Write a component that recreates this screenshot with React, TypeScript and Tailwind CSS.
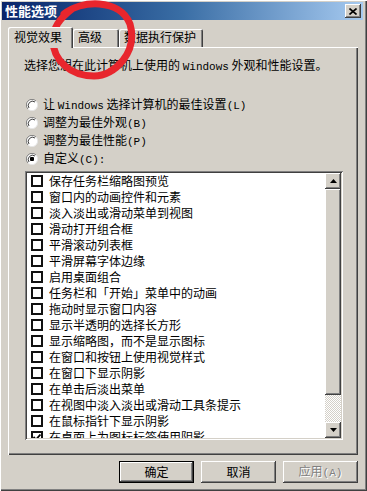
import React from 'react';

const raised =
  'shadow-[inset_-1px_-1px_#404040,inset_1px_1px_#ffffff,inset_-2px_-2px_#808080,inset_2px_2px_#d4d0c8]';
const sunken =
  'shadow-[inset_1px_1px_#808080,inset_-1px_-1px_#ffffff,inset_2px_2px_#404040,inset_-2px_-2px_#d4d0c8]';

const Mono: React.FC<{ children: React.ReactNode }> = ({ children }) => (
  <span className="font-['Liberation_Mono',monospace] text-[11px]">{children}</span>
);

const radios: { label: React.ReactNode; checked?: boolean }[] = [
  { label: <>让 <Mono>Windows</Mono> 选择计算机的最佳设置<Mono>(L)</Mono></> },
  { label: <>调整为最佳外观<Mono>(B)</Mono></> },
  { label: <>调整为最佳性能<Mono>(P)</Mono></> },
  { label: <>自定义<Mono>(C):</Mono></>, checked: true },
];

const options = [
  '保存任务栏缩略图预览',
  '窗口内的动画控件和元素',
  '淡入淡出或滑动菜单到视图',
  '滑动打开组合框',
  '平滑滚动列表框',
  '平滑屏幕字体边缘',
  '启用桌面组合',
  '任务栏和「开始」菜单中的动画',
  '拖动时显示窗口内容',
  '显示半透明的选择长方形',
  '显示缩略图，而不是显示图标',
  '在窗口和按钮上使用视觉样式',
  '在窗口下显示阴影',
  '在单击后淡出菜单',
  '在视图中淡入淡出或滑动工具条提示',
  '在鼠标指针下显示阴影',
  '在桌面上为图标标签使用阴影',
];

const Radio: React.FC<{ checked?: boolean }> = ({ checked }) => (
  <svg width="12" height="12" viewBox="0 0 12 12" className="shrink-0">
    <circle cx="6" cy="6" r="5.5" fill="#fff" />
    <path d="M10 2 A5.5 5.5 0 0 0 2 10" fill="none" stroke="#808080" strokeWidth="1" />
    <path d="M9 3 A4.3 4.3 0 0 0 3 9" fill="none" stroke="#404040" strokeWidth="1" />
    <path d="M2 10 A5.5 5.5 0 0 0 10 2" fill="none" stroke="#e6e6e6" strokeWidth="1" />
    {checked && <rect x="4" y="4" width="4" height="4" rx="1" fill="#000" />}
  </svg>
);

const Arrow: React.FC<{ up?: boolean }> = ({ up }) => (
  <svg width="7" height="4" viewBox="0 0 7 4">
    <path d={up ? 'M3.5 0 L7 4 L0 4 Z' : 'M0 0 L7 0 L3.5 4 Z'} fill="#000" />
  </svg>
);

const Tab: React.FC<{ label: string; active?: boolean; width: number }> = ({ label, active, width }) => (
  <div
    style={{ width }}
    className={
      active
        ? 'relative z-10 -mb-px h-[21px] bg-[#d4d0c8] rounded-t-[2px] pl-[6px] pt-[3px] shadow-[inset_1px_1px_#ffffff,inset_-1px_0_#404040,inset_-2px_0_#808080]'
        : 'h-[18px] bg-[#d4d0c8] rounded-t-[2px] pl-[5px] pt-[1px] shadow-[inset_1px_1px_#ffffff,inset_-1px_0_#404040,inset_-2px_0_#808080]'
    }
  >
    <span className="leading-[14px]">{label}</span>
  </div>
);

const Button: React.FC<{ label: React.ReactNode; primary?: boolean; disabled?: boolean }> = ({
  label,
  primary,
  disabled,
}) => (
  <div
    className={
      'w-[75px] h-[22px] flex items-center justify-center bg-[#d4d0c8] ' +
      (primary
        ? 'border border-black shadow-[inset_-1px_-1px_#404040,inset_1px_1px_#ffffff,inset_-2px_-2px_#808080]'
        : raised)
    }
  >
    <span className={disabled ? 'text-[#808080] [text-shadow:1px_1px_#ffffff]' : 'text-black'}>
      {label}
    </span>
  </div>
);

export default function App() {
  return (
    <div className="relative w-[367px] h-[491px] overflow-hidden bg-[#d4d0c8] pt-[2px] pl-[2px] pr-[4px] text-[12px] leading-[14px] text-black font-['Noto_Sans_CJK_SC',sans-serif] shadow-[inset_1px_1px_#ffffff,inset_-1px_-1px_#404040,inset_-2px_-2px_#808080]">
      {/* title bar */}
      <div className="h-[18px] flex items-center justify-between pl-[3px] pr-[2px] bg-linear-to-r from-[#0a246a] via-[#3a6ea5] to-[#a6caf0]">
        <span className="text-white font-bold text-[13px] leading-[16px]">性能选项</span>
        <div className={`w-[16px] h-[14px] flex items-center justify-center bg-[#d4d0c8] ${raised}`}>
          <svg width="8" height="7" viewBox="0 0 8 7">
            <path d="M0.5 0.5 L7.5 6.5 M7.5 0.5 L0.5 6.5" stroke="#000" strokeWidth="1.6" />
          </svg>
        </div>
      </div>

      {/* tabs */}
      <div className="mt-[7px] ml-[6px] flex items-end h-[20px]">
        <Tab label="视觉效果" active width={65} />
        <Tab label="高级" width={46} />
        <Tab label="数据执行保护" width={84} />
      </div>

      {/* panel */}
      <div className="ml-[6px] w-[350px] h-[408px] pt-[11px] pl-[16px] flex flex-col shadow-[inset_1px_1px_#ffffff,inset_-1px_-1px_#404040,inset_-2px_-2px_#808080]">
        <div className="h-[14px]">
          选择您想在此计算机上使用的 <Mono>Windows</Mono> 外观和性能设置。
        </div>

        <div className="mt-[24px] flex flex-col">
          {radios.map((r, i) => (
            <div key={i} className="h-[18px] flex items-center gap-[5px] pl-[2px]">
              <Radio checked={r.checked} />
              <span>{r.label}</span>
            </div>
          ))}
        </div>

        {/* list */}
        <div className={`mt-[3px] ml-[1px] w-[318px] h-[269px] bg-white p-[2px] flex ${sunken}`}>
          <div className="flex-1 overflow-hidden flex flex-col">
            {options.map((o, i) => (
              <div key={i} className="h-[16px] shrink-0 flex items-center gap-[6px] pl-[4px]">
                <div className="w-[12px] h-[12px] shrink-0 border-2 border-[#111] bg-white flex items-center justify-center">
                  {i === options.length - 1 && (
                    <svg width="8" height="7" viewBox="0 0 8 7">
                      <path d="M0.5 3 L3 5.5 L7.5 0.5" fill="none" stroke="#000" strokeWidth="1.8" />
                    </svg>
                  )}
                </div>
                <span className="whitespace-nowrap">{o}</span>
              </div>
            ))}
          </div>
          {/* scrollbar */}
          <div className="w-[16px] flex flex-col">
            <div className={`h-[16px] flex items-center justify-center bg-[#d4d0c8] ${raised}`}>
              <Arrow up />
            </div>
            <div className={`h-[206px] bg-[#d4d0c8] ${raised}`} />
            <div className="flex-1 bg-[repeating-conic-gradient(#ffffff_0_25%,#d4d0c8_0_50%)] bg-[length:2px_2px]" />
            <div className={`h-[16px] flex items-center justify-center bg-[#d4d0c8] ${raised}`}>
              <Arrow />
            </div>
          </div>
        </div>
      </div>

      {/* buttons */}
      <div className="mt-[6px] pr-[5px] flex justify-end gap-[7px]">
        <Button label="确定" primary />
        <Button label="取消" />
        <Button label={<>应用<Mono>(A)</Mono></>} disabled />
      </div>

      {/* red hand-drawn annotation */}
      <svg
        className="absolute left-0 top-0 pointer-events-none"
        width="150"
        height="90"
        viewBox="0 0 150 90"
      >
        <path
          d="M64 14 C80 0, 120 -2, 130 24 C138 52, 115 76, 94 76 C70 76, 53 60, 53 40 C53 28, 59 19, 72 9"
          fill="none"
          stroke="#e8262d"
          strokeWidth="7"
          strokeLinecap="round"
        />
      </svg>
    </div>
  );
}
